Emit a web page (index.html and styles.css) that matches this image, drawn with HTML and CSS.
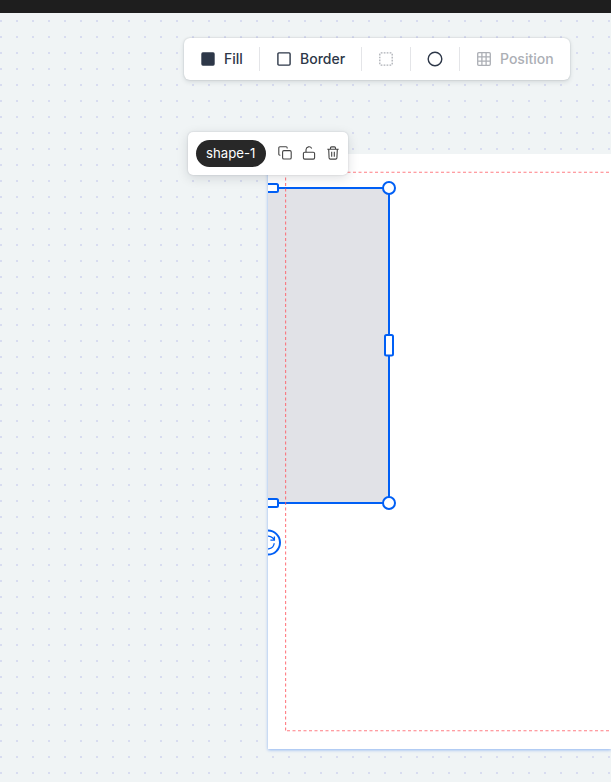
FILE: index.html
```html
<!DOCTYPE html>
<html lang="en">
<head>
<meta charset="utf-8">
<title>Shape editor</title>
<link rel="stylesheet" href="styles.css">
</head>
<body>
<header class="topbar"></header>
<main class="workspace">
  <section class="page">
    <svg class="artwork" width="343" height="595" viewBox="268 154 343 595">
      <rect class="shape" x="147" y="188" width="242" height="315"/>
      <rect class="outline" x="147" y="188" width="242" height="315"/>
      <path class="guide" d="M285.6 172V731"/>
      <path class="guide" d="M287 172.3H611"/>
      <path class="guide" d="M287 730.8H611"/>
      <rect class="handle" x="257" y="184" width="21" height="8" rx="1.5"/>
      <rect class="handle" x="257" y="499" width="21" height="8" rx="1.5"/>
      <rect class="handle" x="385" y="335" width="8" height="20.5" rx="1.5"/>
      <circle class="handle" cx="389" cy="188" r="6"/>
      <circle class="handle" cx="389" cy="503" r="6"/>
      <circle class="handle" cx="268" cy="542.6" r="12"/>
      <path class="rotate" d="M274.2 543.2a6.3 6.3 0 0 1-11.5 2.8M262 542a6.3 6.3 0 0 1 10.5-4.2l1.6 1.6M274.4 536.6v3.6h-4"/>
    </svg>
  </section>
  <div class="toolbar">
    <button class="tool fill"><svg width="14" height="14" viewBox="0 0 14 14"><rect x=".3" y=".3" width="13.4" height="13.4" rx="1.6" fill="currentColor"/></svg>Fill</button>
    <button class="tool border"><svg width="14" height="14" viewBox="0 0 14 14"><rect x=".9" y=".9" width="12.2" height="12.2" rx="1" fill="none" stroke="currentColor" stroke-width="1.4"/></svg>Border</button>
    <button class="tool dashed muted" aria-label="Border style"><svg width="14" height="14" viewBox="0 0 14 14"><rect x=".8" y=".8" width="12.4" height="12.4" rx="1" fill="none" stroke="currentColor" stroke-width="1.3" stroke-dasharray="1.7 1.25"/></svg></button>
    <button class="tool round" aria-label="Shape"><svg width="16" height="16" viewBox="0 0 16 16"><circle cx="8" cy="8" r="6.8" fill="none" stroke="currentColor" stroke-width="1.4"/></svg></button>
    <button class="tool position muted"><svg width="14" height="14" viewBox="0 0 14 14"><path fill="none" stroke="currentColor" stroke-width="1.3" d="M1.8.7h10.4q1.1 0 1.1 1.1v10.4q0 1.1-1.1 1.1H1.8Q.7 13.3.7 12.2V1.8Q.7.7 1.8.7ZM4.9.7v12.6M9.1.7v12.6M.7 4.9h12.6M.7 9.1h12.6"/></svg>Position</button>
  </div>
  <div class="object-menu">
    <span class="name">shape-1</span>
    <svg class="action" width="14" height="14" viewBox="0 0 14 14"><rect x="4.6" y="4.6" width="8.6" height="8.4" rx="1.3"/><path d="M2.4 9.2h-.5Q.8 9.2.8 8.1V1.9Q.8.8 1.9.8h6.2q1.1 0 1.1 1.1v.5"/></svg>
    <svg class="action" width="14" height="14" viewBox="0 0 14 14"><rect x="1.4" y="6.3" width="11.2" height="6.8" rx="1.3"/><path d="M4 6.2V3.7a3 3 0 0 1 5.7-1.2"/></svg>
    <svg class="action" width="14" height="14" viewBox="0 0 14 14"><path d="M1.3 3.3h11.4M4.5 3.3V2q0-1.1 1.1-1.1h2.8q1.1 0 1.1 1.1v1.3M2.7 3.4l.4 8.5q.1 1.2 1.3 1.2h5.2q1.2 0 1.3-1.2l.4-8.5M5.7 5.8v5M8.3 5.8v5"/></svg>
  </div>
</main>
</body>
</html>
```
FILE: styles.css
```css
* { box-sizing: border-box; }
body {
  margin: 0;
  height: 782px;
  overflow: hidden;
  display: flex;
  flex-direction: column;
  font-family: Inter, "Liberation Sans", sans-serif;
  background: #f0f4f5;
}
.topbar { height: 13px; flex: none; background: #1e1e1e; }
.workspace {
  position: relative;
  flex: 1;
  padding: 141px 0 0 268px;
  background: conic-gradient(from 90deg at 14px 14px, #d8dcf0 25%, transparent 0) 2px 9px / 16px 16px;
  background-color: #f0f4f5;
}
.page {
  width: 343px;
  height: 595px;
  background: #fff;
  box-shadow: 0 1px 3px rgba(20, 100, 240, .45);
  clip-path: inset(0 0 -8px -5px);
}
.artwork { display: block; }
.shape { fill: #e1e2e7; }
.outline { fill: none; stroke: #005ff5; stroke-width: 2; }
.guide { fill: none; stroke: #ff5c64; stroke-opacity: .8; stroke-width: 1.1; stroke-dasharray: 3 2.5; }
.handle { fill: #fff; stroke: #005ff5; stroke-width: 2; }
.rotate { fill: none; stroke: #005ff5; stroke-width: 1.3; }
.toolbar {
  position: absolute;
  left: 184px;
  top: 25px;
  width: 386px;
  height: 42px;
  display: flex;
  align-items: center;
  background: #fff;
  border-radius: 6px;
  box-shadow: 0 0 2px rgba(20, 30, 45, .2), 0 2px 5px rgba(20, 30, 45, .12);
}
.tool {
  height: 24px;
  padding: 0 0 0 16px;
  border: 0;
  border-right: 1px solid #e4e5e8;
  display: flex;
  align-items: center;
  gap: 9px;
  background: none;
  color: #2d3748;
  font: 500 14px/24px Inter, "Liberation Sans", sans-serif;
}
.tool svg { flex: none; }
.fill { width: 76px; padding-left: 17px; }
.border { width: 102px; padding-left: 17px; }
.dashed { width: 49px; padding-left: 17px; }
.round { width: 49px; }
.position { width: 110px; padding-left: 17px; border-right: 0; }
.muted { color: #acafb5; }
.object-menu {
  position: absolute;
  left: 188px;
  top: 119px;
  width: 159.5px;
  height: 43px;
  padding: 0 0 1px 8px;
  display: flex;
  align-items: center;
  gap: 10px;
  background: #fff;
  border-radius: 5px;
  box-shadow: 0 0 2px rgba(20, 30, 45, .18), 0 3px 12px rgba(20, 30, 45, .14);
}
.name {
  width: 69.5px;
  height: 27px;
  margin-right: 2px;
  border-radius: 14px;
  background: #282828;
  color: #fff;
  text-align: center;
  font-size: 13.2px;
  line-height: 27px;
}
.action { flex: none; fill: none; stroke: #444; stroke-width: 1.1; }
```
